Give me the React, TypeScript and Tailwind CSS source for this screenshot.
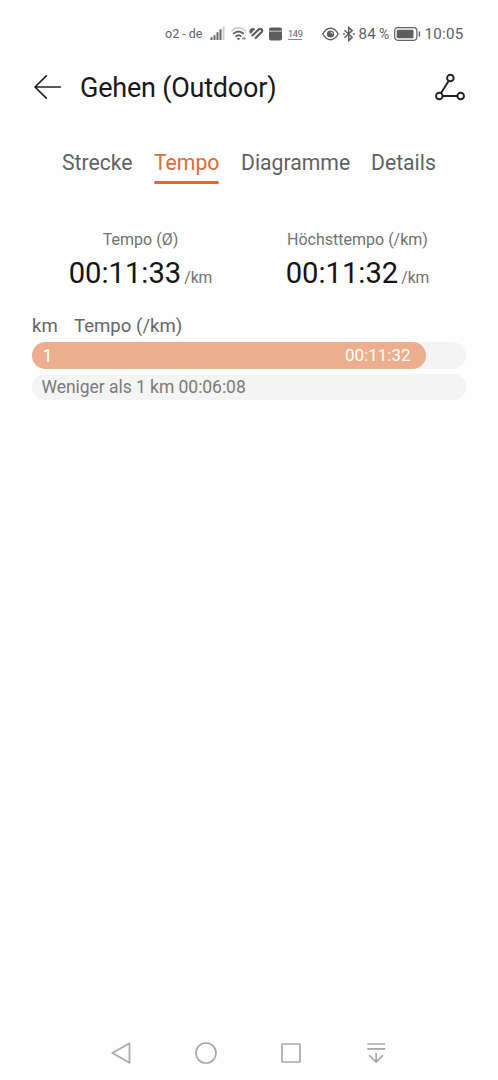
import React from "react";

function SignalIcon() {
  return (
    <svg className="h-4 w-4 shrink-0" viewBox="0 0 16 16" fill="none" strokeWidth="1.9">
      <path d="M1.5 11.3V14M4.5 9.3V14M7.5 6.3V14M10.5 3.3V14" stroke="#626262" />
      <path d="M13.6 0.5V14" stroke="#cfcfcf" />
    </svg>
  );
}

function WifiIcon() {
  return (
    <svg className="h-4 w-[18px] shrink-0" viewBox="0 0 18 16" fill="none" strokeWidth="1.8">
      <path d="M0.2 5.2Q7.5 -1.6 14.8 5.2" stroke="#cfcfcf" />
      <path d="M2.2 7.9Q7.5 3 12.8 7.9" stroke="#626262" />
      <path d="M4.5 10.6Q7.5 7.8 10.3 10.6" stroke="#626262" />
      <path d="M5.8 12.4Q7.5 11 9.2 12.4L7.5 14.2Z" fill="#626262" />
      <path d="M12.4 10.8L10.8 12.4L12.4 14ZM13.3 10.8L14.9 12.4L13.3 14Z" fill="#626262" />
    </svg>
  );
}

function HealthIcon() {
  return (
    <svg className="h-[14px] w-[15px] shrink-0" viewBox="0 0 15 14" fill="none" stroke="#5e5e5e" strokeLinecap="round">
      <path d="M1.2 6.6Q-0.4 3.6 1.5 1.9Q3.7 0.2 6.3 2.1L1.8 6.8Z" fill="#5e5e5e" stroke="none" />
      <path d="M3.4 8.5L9.4 2.7Q11.2 1.2 12.7 2.5Q13.7 3.9 12.6 5.1L6.7 11" strokeWidth="2.2" />
    </svg>
  );
}

function CalendarIcon() {
  return (
    <svg className="h-[14px] w-[13px] shrink-0" viewBox="0 0 13 14">
      <rect x="0" y="0.6" width="13" height="13" rx="2" fill="#5e5e5e" />
      <path d="M0 4.2H13" stroke="#d8d8d8" strokeWidth="0.9" />
    </svg>
  );
}

function EyeIcon() {
  return (
    <svg className="h-[14px] w-[17px] shrink-0" viewBox="0 0 17 14" fill="none" stroke="#5e5e5e" strokeWidth="1.4">
      <path d="M0.8 7Q4 1.3 8.5 1.3T16.2 7Q13 12.7 8.5 12.7T0.8 7Z" />
      <circle cx="8.5" cy="7" r="3.6" fill="#5e5e5e" stroke="none" />
      <path d="M8.5 5.1A1.9 1.9 0 0 1 10.4 7" stroke="#fff" strokeWidth="0.9" />
    </svg>
  );
}

function BluetoothIcon() {
  return (
    <svg className="h-4 w-3 shrink-0" viewBox="0 0 12 16" fill="none" stroke="#5e5e5e" strokeWidth="1.5">
      <path d="M1.5 4.3L9.2 11.4L5.7 14.5V1.5L9.2 4.6L1.5 11.7" />
      <path d="M0.1 8H2M9.9 8H11.8" strokeWidth="1.7" />
    </svg>
  );
}

function BatteryIcon() {
  return (
    <svg className="h-[14px] w-[27px] shrink-0" viewBox="0 0 27 14" fill="none">
      <rect x="0.7" y="0.7" width="22.2" height="12.6" rx="3.2" stroke="#626262" strokeWidth="1.2" />
      <rect x="2.7" y="2.8" width="16.8" height="8.4" rx="1.2" fill="#5e5e5e" />
      <path d="M25.4 4.5V9.5" stroke="#626262" strokeWidth="1.4" />
    </svg>
  );
}

function StatusBar() {
  return (
    <div className="flex h-[68px] items-center pl-[165px] text-[#626262]">
      <div className="w-[45px] text-[12.5px]">o2 - de</div>
      <div className="w-[21px]"><SignalIcon /></div>
      <div className="w-[18px]"><WifiIcon /></div>
      <div className="w-[20px]"><HealthIcon /></div>
      <div className="w-[19px]"><CalendarIcon /></div>
      <div className="w-[34px]">
        <div className="w-[14px] border-b border-[#888888] text-[9.2px] leading-[10px] tracking-[-0.3px]">149</div>
      </div>
      <div className="w-[21px]"><EyeIcon /></div>
      <div className="w-[15.5px]"><BluetoothIcon /></div>
      <div className="flex w-[35.5px] items-baseline gap-[3px] text-[15.2px]">
        <span className="tracking-[0.2px]">84</span>
        <span className="text-[14px]">%</span>
      </div>
      <div className="w-[30.5px]"><BatteryIcon /></div>
      <div className="text-[15.2px] tracking-[0.25px]">10:05</div>
    </div>
  );
}

function Header() {
  return (
    <header className="flex h-10 items-center pl-[34px]">
      <svg className="h-[26px] w-[28px] shrink-0" viewBox="0 0 28 26" fill="none" stroke="#222222" strokeWidth="1.7" strokeLinecap="round" strokeLinejoin="round">
        <path d="M26.3 12H1M12.3 0.9L1 12L12.3 23.2" />
      </svg>
      <h1 className="ml-[18px] w-[354px] text-[27px] leading-[41px] tracking-[-0.22px] text-[#191919]">Gehen (Outdoor)</h1>
      <svg className="h-[30px] w-[32px] shrink-0" viewBox="0 0 32 30" fill="none" stroke="#222222" strokeWidth="1.9">
        <circle cx="16.4" cy="5" r="3.3" />
        <circle cx="5.3" cy="23" r="3.3" />
        <circle cx="26.7" cy="23" r="3.3" />
        <path d="M14.6 7.9L7.1 20.1M8.7 23H23.3" />
      </svg>
    </header>
  );
}

function Tabs() {
  return (
    <nav className="mt-[41px] flex h-9 pl-[62px] text-[21.2px] leading-7 text-[#626262]">
      <div className="w-[92px]">Strecke</div>
      <div className="w-[87px]">
        <div className="h-9 w-[65px] text-[#da6c38]">
          Tempo
          <div className="mt-1 h-[2.5px] rounded-full bg-[#da6c38]" />
        </div>
      </div>
      <div className="w-[130px]">Diagramme</div>
      <div>Details</div>
    </nav>
  );
}

function Metric({ label, value }: { label: string; value: string }) {
  return (
    <div className="flex w-[217px] flex-col items-center">
      <div className="h-5 text-[16px] leading-5 text-[#727272]">{label}</div>
      <div className="mt-1 flex h-[38px] items-baseline gap-[3px] leading-[38px]">
        <span className="text-[29.2px] text-[#151515]">{value}</span>
        <span className="text-[15.7px] text-[#727272]">/km</span>
      </div>
    </div>
  );
}

export default function App() {
  return (
    <main className="flex h-[1080px] w-[498px] flex-col overflow-hidden bg-[#fefefe] font-['Roboto',sans-serif] whitespace-nowrap">
      <StatusBar />
      <Header />
      <Tabs />
      <section className="mt-[45px] flex pl-8">
        <Metric label="Tempo (Ø)" value="00:11:33" />
        <Metric label="Höchsttempo (/km)" value="00:11:32" />
      </section>
      <section className="mt-[22px] w-[466px] pl-8">
        <div className="flex h-6 text-[18.6px] leading-6 text-[#666666]">
          <span className="w-[42px]">km</span>
          <span>Tempo (/km)</span>
        </div>
        <div className="mt-[4px] h-[26.5px] rounded-full bg-[#f4f4f4]">
          <div className="flex h-full w-[394px] items-center justify-between rounded-full bg-[#edae8f] pr-[15.5px] pl-[10.5px] leading-[27px] text-white">
            <span className="text-[18px]">1</span>
            <span className="pt-px text-[17px]">00:11:32</span>
          </div>
        </div>
        <div className="mt-[5px] h-[26.5px] rounded-full bg-[#f4f4f4] pl-[9.5px] text-[17.5px] leading-[26px] tracking-[-0.04px] text-[#7a7a7a]">
          Weniger als 1 km 00:06:08
        </div>
      </section>
      <footer className="mt-auto flex h-[54px] items-center pl-[108px]">
        <svg className="h-[26px] w-[85px] shrink-0" viewBox="0 0 85 26" fill="none" stroke="#a8a8a8" strokeWidth="1.7" strokeLinejoin="round">
          <path d="M21.5 3.2V22.8L4.3 13Z" />
        </svg>
        <svg className="h-[26px] w-[85px] shrink-0" viewBox="0 0 85 26" fill="none" stroke="#a8a8a8" strokeWidth="1.7">
          <circle cx="13" cy="13" r="10" />
        </svg>
        <svg className="h-[26px] w-[85px] shrink-0" viewBox="0 0 85 26" fill="none" stroke="#a8a8a8" strokeWidth="1.7">
          <rect x="4" y="4" width="18" height="18" rx="0.5" />
        </svg>
        <svg className="h-[26px] w-[26px] shrink-0" viewBox="0 0 26 26" fill="none" stroke="#a8a8a8" strokeWidth="1.7">
          <path d="M4.3 4H22.1M4.3 8.8H22.1M13.1 13V22M6.3 15.3L13.1 22L19.8 15.3" />
        </svg>
      </footer>
    </main>
  );
}
